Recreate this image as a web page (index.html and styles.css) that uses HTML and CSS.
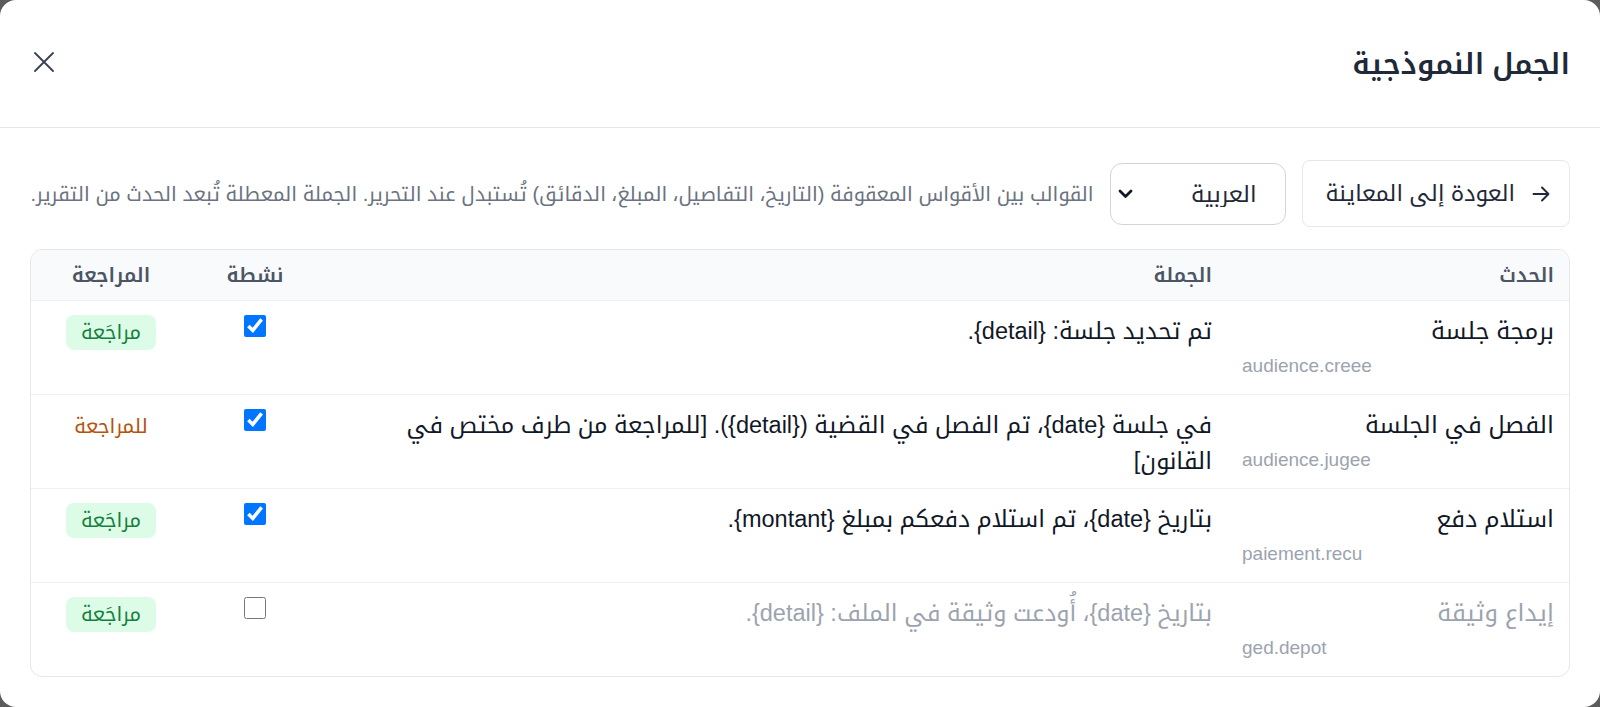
FILE: index.html
```html
<!DOCTYPE html>
<html lang="ar" dir="rtl">
<head>
    <meta charset="UTF-8">
    <meta name="viewport" content="width=device-width, initial-scale=1.0">
    <title>الجمل النموذجية</title>
    <link rel="stylesheet" href="styles.css">
</head>
<body>
    <div class="modal">
        <div class="modal-header">
            <h2>الجمل النموذجية</h2>
            <button class="close-btn" aria-label="إغلاق">
                <svg width="22" height="22" viewBox="0 0 22 22" fill="none" stroke="#374151" stroke-width="1.8" stroke-linecap="round">
                    <path d="M2 2 L20 20 M20 2 L2 20"/>
                </svg>
            </button>
        </div>

        <div class="modal-body">
            <div class="toolbar">
                <button class="back-btn">
                    <svg width="18" height="16" viewBox="0 0 18 16" fill="none" stroke="#1f2937" stroke-width="1.9" stroke-linecap="round" stroke-linejoin="round">
                        <path d="M1.5 8 H16.5 M10 1.5 L16.5 8 L10 14.5"/>
                    </svg>
                    <span>العودة إلى المعاينة</span>
                </button>
                <div class="select-wrapper">
                    <select class="lang-select">
                        <option>العربية</option>
                        <option>Français</option>
                    </select>
                    <svg class="chevron" width="15" height="10" viewBox="0 0 15 10" fill="none" stroke="#111827" stroke-width="2.8" stroke-linecap="round" stroke-linejoin="round">
                        <path d="M2 2 L7.5 7.5 L13 2"/>
                    </svg>
                </div>
                <p class="help">القوالب بين الأقواس المعقوفة (التاريخ، التفاصيل، المبلغ، الدقائق) تُستبدل عند التحرير. الجملة المعطلة تُبعد الحدث من التقرير.</p>
            </div>

            <div class="table-card">
                <table>
                    <colgroup>
                        <col class="col-event">
                        <col>
                        <col class="col-active">
                        <col class="col-review">
                    </colgroup>
                    <thead>
                        <tr>
                            <th>الحدث</th>
                            <th>الجملة</th>
                            <th class="center">نشطة</th>
                            <th class="center">المراجعة</th>
                        </tr>
                    </thead>
                    <tbody>
                        <tr>
                            <td>
                                <div class="event-name">برمجة جلسة</div>
                                <div class="event-code">audience.creee</div>
                            </td>
                            <td class="sentence">تم تحديد جلسة: {detail}.</td>
                            <td class="center"><input type="checkbox" checked></td>
                            <td class="center"><span class="badge">مراجَعة</span></td>
                        </tr>
                        <tr>
                            <td>
                                <div class="event-name">الفصل في الجلسة</div>
                                <div class="event-code">audience.jugee</div>
                            </td>
                            <td class="sentence">في جلسة {date}، تم الفصل في القضية ({detail}). [للمراجعة من طرف مختص في القانون]</td>
                            <td class="center"><input type="checkbox" checked></td>
                            <td class="center"><span class="pending">للمراجعة</span></td>
                        </tr>
                        <tr>
                            <td>
                                <div class="event-name">استلام دفع</div>
                                <div class="event-code">paiement.recu</div>
                            </td>
                            <td class="sentence">بتاريخ {date}، تم استلام دفعكم بمبلغ {montant}.</td>
                            <td class="center"><input type="checkbox" checked></td>
                            <td class="center"><span class="badge">مراجَعة</span></td>
                        </tr>
                        <tr class="disabled">
                            <td>
                                <div class="event-name">إيداع وثيقة</div>
                                <div class="event-code">ged.depot</div>
                            </td>
                            <td class="sentence">بتاريخ {date}، أُودعت وثيقة في الملف: {detail}.</td>
                            <td class="center"><input type="checkbox"></td>
                            <td class="center"><span class="badge">مراجَعة</span></td>
                        </tr>
                    </tbody>
                </table>
            </div>
        </div>
    </div>
</body>
</html>
```

FILE: styles.css
```css
* {
    box-sizing: border-box;
}

body {
    font-family: 'Liberation Sans', 'Noto Kufi Arabic', 'Noto Sans Arabic', sans-serif;
    margin: 0;
    background-color: #5c5c5c;
    color: #111827;
}

.modal {
    background: white;
    height: 100vh;
    border-radius: 16px;
    overflow: hidden;
}

.modal-header {
    display: flex;
    align-items: center;
    justify-content: space-between;
    height: 128px;
    padding: 0 30px 0 33px;
    border-bottom: 1px solid #e5e7eb;
}

h2 {
    margin: 0;
    font-size: 29px;
    font-weight: 600;
    line-height: 44px;
    color: #1f2937;
}

.close-btn {
    background: none;
    border: none;
    padding: 0;
    margin-top: -4px;
    display: flex;
    cursor: pointer;
}

.modal-body {
    padding: 32px 30px 30px;
}

.toolbar {
    display: flex;
    align-items: center;
    gap: 16px;
    margin-bottom: 22px;
}

.back-btn {
    display: flex;
    align-items: center;
    gap: 17px;
    height: 67px;
    padding: 0 19px 0 23px;
    background: white;
    border: 1px solid #e5e7eb;
    border-radius: 8px;
    font-family: inherit;
    font-size: 22.5px;
    color: #1f2937;
    cursor: pointer;
}

.select-wrapper {
    position: relative;
}

.lang-select {
    appearance: none;
    width: 176px;
    height: 62px;
    padding: 0 28px 0 30px;
    border: 1px solid #d1d5db;
    border-radius: 12px;
    background: white;
    font-family: inherit;
    font-size: 23px;
    color: #1f2937;
}

.chevron {
    position: absolute;
    left: 8px;
    top: 26px;
    pointer-events: none;
}

.help {
    margin: 0;
    font-size: 20px;
    color: #6b7280;
}

.table-card {
    border: 1px solid #e5e7eb;
    border-radius: 12px;
    overflow: hidden;
}

table {
    width: 100%;
    border-collapse: collapse;
    table-layout: fixed;
}

.col-event {
    width: 342px;
}

.col-active {
    width: 128px;
}

.col-review {
    width: 160px;
}

th {
    background-color: #f8fafc;
    height: 50px;
    padding: 0 15px;
    text-align: right;
    font-size: 20px;
    font-weight: 600;
    color: #4b5563;
}

td {
    padding: 12px 15px 16px;
    vertical-align: top;
    border-top: 1px solid #eef0f3;
}

.center {
    text-align: center;
}

.event-name {
    font-size: 24px;
    line-height: 36px;
    color: #111827;
}

.event-code {
    direction: ltr;
    text-align: left;
    margin-top: 4px;
    font-size: 19px;
    line-height: 25px;
    color: #9ca3af;
}

.sentence {
    padding-bottom: 6px;
    font-size: 23.5px;
    line-height: 36px;
    color: #111827;
}

input[type="checkbox"] {
    display: block;
    width: 22px;
    height: 22px;
    margin: 2px auto 0;
}

.badge {
    display: inline-block;
    margin-top: 2px;
    padding: 5px 15px;
    border-radius: 8px;
    background-color: #dcfce7;
    color: #15803d;
    font-size: 20px;
    line-height: 25px;
}

.pending {
    display: inline-block;
    margin-top: 2px;
    padding: 5px 0;
    color: #b45309;
    font-size: 20px;
    line-height: 25px;
}

.disabled .event-name,
.disabled .sentence {
    color: #9ca3af;
}
```
